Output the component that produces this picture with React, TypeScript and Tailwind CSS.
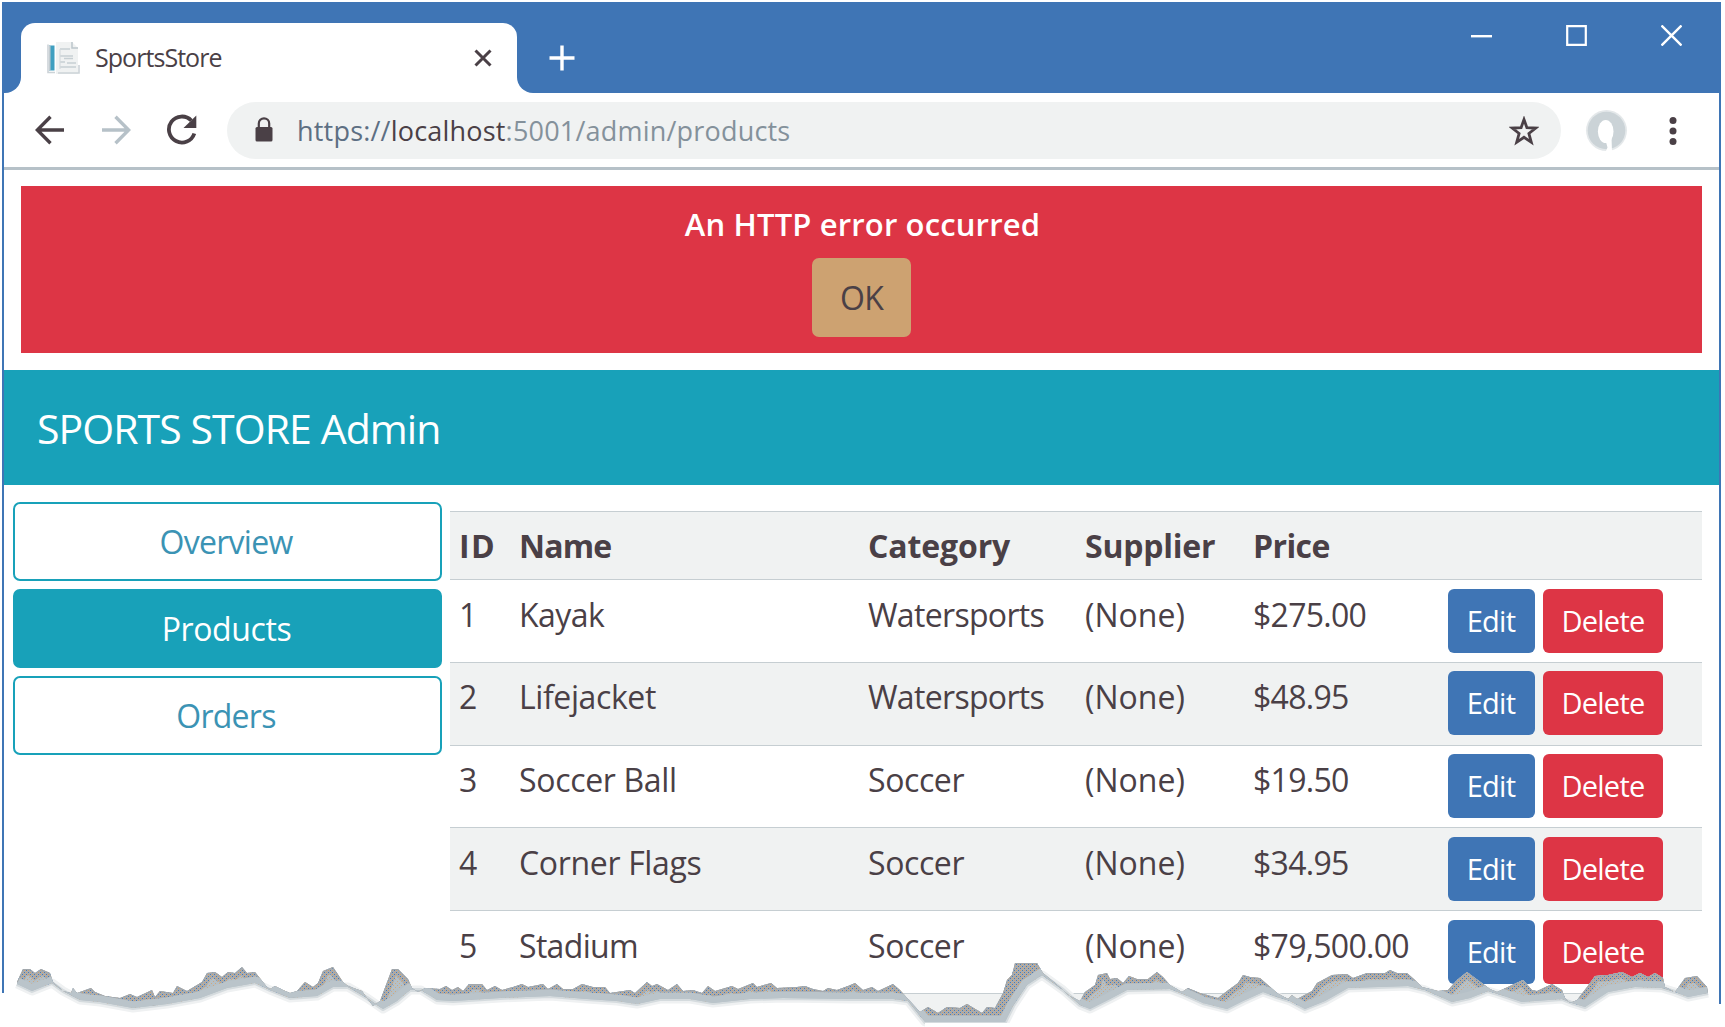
import type { ReactNode } from "react";

type Product = {
  id: number;
  name: string;
  nameTracking: string;
  category: string;
  categoryTracking: string;
  price: string;
};

const products: Product[] = [
  { id: 1, name: "Kayak", nameTracking: "tracking-[-0.55px]", category: "Watersports", categoryTracking: "tracking-[-0.68px]", price: "$275.00" },
  { id: 2, name: "Lifejacket", nameTracking: "tracking-[-0.4px]", category: "Watersports", categoryTracking: "tracking-[-0.68px]", price: "$48.95" },
  { id: 3, name: "Soccer Ball", nameTracking: "tracking-[-0.33px]", category: "Soccer", categoryTracking: "tracking-[-0.4px]", price: "$19.50" },
  { id: 4, name: "Corner Flags", nameTracking: "tracking-[-0.33px]", category: "Soccer", categoryTracking: "tracking-[-0.4px]", price: "$34.95" },
  { id: 5, name: "Stadium", nameTracking: "tracking-[-0.67px]", category: "Soccer", categoryTracking: "tracking-[-0.4px]", price: "$79,500.00" },
];

const COLUMNS = "grid grid-cols-[60px_349px_217px_168px_194px_264px]";

function TitleBar() {
  return (
    <div className="flex h-[91px] items-start bg-[#3f75b5] pl-[1px]">
      <div className="h-4 w-4 self-end overflow-hidden bg-white">
        <div className="h-4 w-4 rounded-br-2xl bg-[#3f75b5]" />
      </div>
      <div className="mt-[21px] flex h-[70px] w-[496px] items-center rounded-t-[14px] bg-white pl-[26px] pr-[25px]">
        <svg width="33" height="34" viewBox="0 0 33 34">
          <path d="M9 1h16l6 6v26H9z" fill="#f0f2f2" />
          <path d="M25 1v6h6" fill="none" stroke="#bcc6cc" strokeWidth="1.5" />
          <path d="M1 3.500v28h7M11 32h21V24" fill="none" stroke="#ccd3d7" strokeWidth="1.600" />
          <path d="M2 4.500h5.500v25H2z" fill="#3f9fc0" />
          <path d="M2 4.500h1.500v25H2z" fill="#c3ccd1" />
          <path d="M13 8h10M13 15h13M17 17.500h9M13 21h5M20 22h9M13 26h16" fill="none" stroke="#c6cfd3" strokeWidth="1.500" />
          <path d="M13 8v20" stroke="#d5dbde" strokeWidth="1.200" />
        </svg>
        <span className="ml-[15px] flex-1 -translate-y-px text-[25px] leading-8 tracking-[-0.95px] text-[#4a4046]">SportsStore</span>
        <svg width="18" height="18" viewBox="0 0 18 18" stroke="#4a4046" strokeWidth="3">
          <path d="M1.500 1.500l15 15M16.500 1.500l-15 15" />
        </svg>
      </div>
      <div className="h-4 w-4 self-end overflow-hidden bg-white">
        <div className="h-4 w-4 rounded-bl-2xl bg-[#3f75b5]" />
      </div>
      <svg className="ml-[16px] mt-[43px]" width="26" height="26" viewBox="0 0 26 26" stroke="#fff" strokeWidth="3.4">
        <path d="M0.500 13h25M13 0.500v25" />
      </svg>
      <div className="mr-[37px] mt-[23px] flex flex-1 justify-end gap-[74px]">
        <svg width="21" height="21" viewBox="0 0 21 21" stroke="#fff" strokeWidth="2.4">
          <path d="M0 11.200h21" />
        </svg>
        <svg width="21" height="21" viewBox="0 0 21 21" stroke="#fff" strokeWidth="2.2" fill="none">
          <path d="M1.200 1.200h18.600v18.600H1.200z" />
        </svg>
        <svg width="21" height="21" viewBox="0 0 21 21" stroke="#fff" strokeWidth="2.4">
          <path d="M0.500 0.500l20 20M20.500 0.500l-20 20" />
        </svg>
      </div>
    </div>
  );
}

function Toolbar() {
  return (
    <div className="flex h-[77px] items-center border-b-[3px] border-[#b6c1c8] pl-[31px] pr-[40px]">
      <svg width="30" height="30" viewBox="0 0 30 30" fill="none" stroke="#4a4046" strokeWidth="3.4">
        <path d="M29 15H3M15.500 1.800L2.300 15l13.200 13.200" />
      </svg>
      <svg className="ml-[36px]" width="30" height="30" viewBox="0 0 30 30" fill="none" stroke="#b6c1c8" strokeWidth="3.4">
        <path d="M1 15h26M14.500 1.800L27.700 15 14.500 28.200" />
      </svg>
      <svg className="ml-[35px]" width="32" height="32" viewBox="0 0 32 32">
        <path d="M25.300 6.500A13 13 0 1 0 28.300 19.500" fill="none" stroke="#4a4046" strokeWidth="3.800" />
        <path d="M30.300 1.500v12.500H17.500z" fill="#4a4046" />
      </svg>
      <div className="ml-[29px] flex h-[57px] w-[1334px] items-center rounded-full bg-[#f0f2f2] pl-[28px] pr-[22px]">
        <svg width="18" height="26" viewBox="0 0 18 26">
          <path d="M3.800 10V6.500a5.200 5.200 0 0 1 10.400 0V10" fill="none" stroke="#4a4046" strokeWidth="2.200" />
          <rect x="0.500" y="10" width="17" height="14.500" rx="1.500" fill="#4a4046" />
        </svg>
        <span className="ml-[24px] flex-1 translate-y-px whitespace-nowrap text-[27px] leading-9 tracking-[0.2px] text-[#84919b]">
          <span className="text-[#5d6f83]">https://</span>
          <span className="text-[#4a4046]">localhost</span>
          :5001/admin/products
        </span>
        <svg className="translate-y-px" width="30" height="30" viewBox="0 0 30 30">
          <path
            d="M15 3.500l2.900 8.200 8.900.300-6.900 5.500 2.400 8.800L15 21.300l-7.300 5L10.100 17.500 3.200 12l8.900-.300z"
            fill="none"
            stroke="#4a4046"
            strokeWidth="2.800"
          />
        </svg>
      </div>
      <svg className="ml-[24px]" width="43" height="43" viewBox="0 0 43 43">
        <circle cx="21.500" cy="21.500" r="20.500" fill="#e4e8ea" />
        <circle cx="21.500" cy="21.500" r="18.800" fill="#cbd3d7" />
        <ellipse cx="20.700" cy="22.500" rx="7.800" ry="11.500" fill="#fff" />
        <path d="M21 33l5.500-5L27 43h-6.500l2-4.500z" fill="#fff" />
      </svg>
      <svg className="ml-[41px] translate-y-px" width="8" height="30" viewBox="0 0 8 30" fill="#4a4046">
        <circle cx="4" cy="4.500" r="3.500" />
        <circle cx="4" cy="15" r="3.500" />
        <circle cx="4" cy="25.500" r="3.500" />
      </svg>
    </div>
  );
}

function ErrorBanner() {
  return (
    <div className="ml-[17px] mt-[16px] flex h-[167px] w-[1681px] flex-col items-center bg-[#dd3545] pt-[16px]">
      <div className="pl-[2px] text-[31px] font-semibold leading-[44px] tracking-[0.15px] text-white">An HTTP error occurred</div>
      <button className="mt-[12px] h-[79px] w-[99px] rounded-[7px] bg-[#cda271] pt-px text-[32px] tracking-[-0.8px] text-[#4a4046]">OK</button>
    </div>
  );
}

function NavButton({ active, children }: { active?: boolean; children: ReactNode }) {
  return (
    <button
      className={
        active
          ? "h-[79px] w-full rounded-[7px] border-2 border-[#18a1b9] bg-[#18a1b9] pr-[2px] text-[32px] tracking-[-0.4px] text-white"
          : "h-[79px] w-full rounded-[7px] border-2 border-[#18a1b9] bg-white pr-[3px] text-[32px] tracking-[-0.72px] text-[#3b93b4]"
      }
    >
      {children}
    </button>
  );
}

function ProductTable() {
  return (
    <div className="mt-[26px] w-[1252px] text-[32px] leading-[48px] text-[#4a4046]">
      <div className={`${COLUMNS} h-[68px] border-t border-[#c6ced2] bg-[#f0f2f2] pl-[9px] pt-[10px] font-bold`}>
        <div className="tracking-[1.5px]">ID</div>
        <div className="tracking-[-0.8px]">Name</div>
        <div className="tracking-[-0.13px]">Category</div>
        <div className="tracking-[-0.23px]">Supplier</div>
        <div className="tracking-[-0.59px]">Price</div>
        <div />
      </div>
      {products.map((p) => (
        <div
          key={p.id}
          className={`${COLUMNS} h-[82.75px] border-t border-[#c6ced2] pl-[9px] pt-[8.5px] even:bg-white odd:bg-[#f0f2f2]`}
        >
          <div className="pt-[2px]">{p.id}</div>
          <div className={`pt-[2px] ${p.nameTracking}`}>{p.name}</div>
          <div className={`pt-[2px] ${p.categoryTracking}`}>{p.category}</div>
          <div className="pt-[2px]">(None)</div>
          <div className="pt-[2px] tracking-[-0.73px]">{p.price}</div>
          <div className="flex gap-[8px] pl-px text-[29px] tracking-[-0.74px] text-white">
            <button className="h-[64px] w-[87px] rounded-[6px] bg-[#3f75b5] pr-px">Edit</button>
            <button className="h-[64px] w-[120px] rounded-[6px] bg-[#dd3545]">Delete</button>
          </div>
        </div>
      ))}
      <div className="h-[35px] border-t border-[#c6ced2] bg-[#f0f2f2]" />
    </div>
  );
}

const tornTop =
  "17,982 23,969 30,969 35,973 41,969 50,973 53,982 63,991 71,993 73,988 77,993 91,988 95,992 105,996 120,998 130,994 137,997 152,990 155,997 160,991 173,993 177,986 187,991 202,982 207,973 215,972 222,977 228,972 235,973 242,967 247,973 255,972 267,987 270,989 275,986 283,990 290,993 297,991 305,982 313,987 318,983 323,971 333,967 343,982 348,986 362,991 367,998 373,1006 380,1001 392,969 398,969 408,979 412,988 418,992 425,988 440,989 446,986 452,990 458,987 463,991 469,984 482,984 487,990 495,986 502,990 513,987 522,984 528,987 543,984 548,989 557,984 563,989 573,989 582,984 593,987 605,987 610,993 630,990 635,993 647,982 652,986 657,984 668,990 677,984 683,991 693,990 702,993 708,986 715,991 732,986 738,989 753,983 757,987 771,983 777,988 797,987 805,986 813,989 823,991 828,988 837,990 848,986 855,983 863,990 872,987 878,991 893,984 900,990 908,999 920,1012 928,1007 938,1013 947,1007 960,1008 967,1004 982,1013 987,1007 995,1008 1003,993 1007,980 1012,975 1015,963 1037,963 1043,973 1062,989 1068,995 1080,1001 1085,992 1095,985 1098,975 1107,973 1110,979 1117,978 1123,983 1129,976 1137,979 1148,979 1157,972 1163,977 1170,985 1182,992 1188,988 1200,993 1218,998 1227,991 1238,983 1243,975 1250,977 1260,978 1277,993 1288,999 1292,995 1297,999 1312,991 1317,983 1332,975 1347,974 1353,978 1367,973 1385,973 1390,970 1397,973 1407,973 1415,980 1422,987 1438,991 1448,990 1457,980 1467,972 1475,978 1490,989 1497,992 1512,985 1523,980 1532,990 1537,991 1552,984 1562,990 1565,998 1570,1003 1577,1000 1587,987 1595,976 1608,975 1622,972 1632,977 1640,973 1648,977 1655,973 1663,978 1665,987 1675,992 1685,978 1697,976 1707,987 1708,993";

const tornBottom =
  "1708,993 1688,997 1675,992 1662,988 1635,987 1608,992 1585,1007 1572,1003 1562,999 1522,1002 1498,994 1488,991 1470,998 1452,1002 1425,990 1408,986 1348,988 1325,1001 1305,1009 1290,1001 1277,997 1263,992 1243,1001 1227,1009 1203,1003 1183,994 1170,989 1127,990 1110,999 1090,1009 1080,1005 1063,990 1042,975 1027,985 1013,1006 1005,1022 925,1022 908,1001 893,999 850,999 783,998 750,999 713,1003 690,999 660,999 637,1004 617,1001 587,999 550,996 500,998 453,1001 437,1000 421,990 410,990 397,1001 383,1009 367,998 348,987 333,987 317,996 290,998 270,990 255,983 227,988 200,998 167,1004 133,1008 100,1002 80,1000 63,991 52,983 32,991 17,984";

// Ragged paper edge that cuts the page off at the bottom of the window.
function TornEdge() {
  return (
    <svg className="absolute left-0 top-[950px]" width="1725" height="77" viewBox="0 950 1725 77">
      <defs>
        <pattern id="grain" width="4" height="4" patternUnits="userSpaceOnUse">
          <rect width="4" height="4" fill="#a9adb1" />
          <path d="M0 0h1v1H0zM2 2h1v1H2z" fill="#4b7ab3" />
          <path d="M2 0h1v1H2zM0 2h1v1H0z" fill="#d0a06a" />
        </pattern>
        <pattern id="sand" width="4" height="4" patternUnits="userSpaceOnUse">
          <path d="M1 1h1v1H1zM3 3h1v1H3z" fill="#cfa981" />
        </pattern>
        <clipPath id="band">
          <polygon points={`${tornTop} ${tornBottom}`} />
        </clipPath>
      </defs>
      <polygon points={`0,993 17,993 ${tornTop} 1712,993 1712,1004 1725,1004 1725,1027 0,1027`} fill="#fff" />
      <polyline points={tornBottom} fill="none" stroke="#eff1f2" strokeWidth="9" strokeLinejoin="round" />
      <polyline points={tornBottom} fill="none" stroke="#d5dbde" strokeWidth="4" strokeLinejoin="round" />
      <polygon points={`${tornTop} ${tornBottom}`} fill="#b5c0c7" />
      <g clipPath="url(#band)">
        <polyline points={tornTop} fill="none" stroke="url(#sand)" strokeWidth="24" />
        <polyline points={tornTop} fill="none" stroke="url(#grain)" strokeWidth="12" />
        <polygon points="920,1008 1003,1000 1012,970 1040,962 1030,980 1003,1022 930,1022" fill="url(#grain)" />
        <polyline points={tornTop} fill="none" stroke="#a2a8ad" strokeWidth="2" />
        <polyline points={tornBottom} fill="none" stroke="#bac4ca" strokeWidth="13" />
      </g>
      <rect x="925" y="1023" width="85" height="4" fill="#fff" />
    </svg>
  );
}

export default function App() {
  return (
    <div className="relative h-[1027px] w-[1725px] overflow-hidden bg-white font-['Open_Sans',sans-serif]">
      <div className="ml-[2px] mt-[2px] h-[1025px] w-[1719px] border-x-2 border-[#3f75b5] bg-white">
        <TitleBar />
        <Toolbar />
        <ErrorBanner />
        <div className="mt-[17px] flex h-[115px] items-center bg-[#18a1b9] pl-[33px] pt-[3px] text-[41px] tracking-[-0.93px] text-white">
          SPORTS STORE Admin
        </div>
        <div className="flex h-[540px] items-start overflow-hidden pl-[9px]">
          <div className="mr-[8px] mt-[17px] flex w-[429px] flex-col gap-[8px]">
            <NavButton>Overview</NavButton>
            <NavButton active>Products</NavButton>
            <NavButton>Orders</NavButton>
          </div>
          <ProductTable />
        </div>
      </div>
      <TornEdge />
    </div>
  );
}
